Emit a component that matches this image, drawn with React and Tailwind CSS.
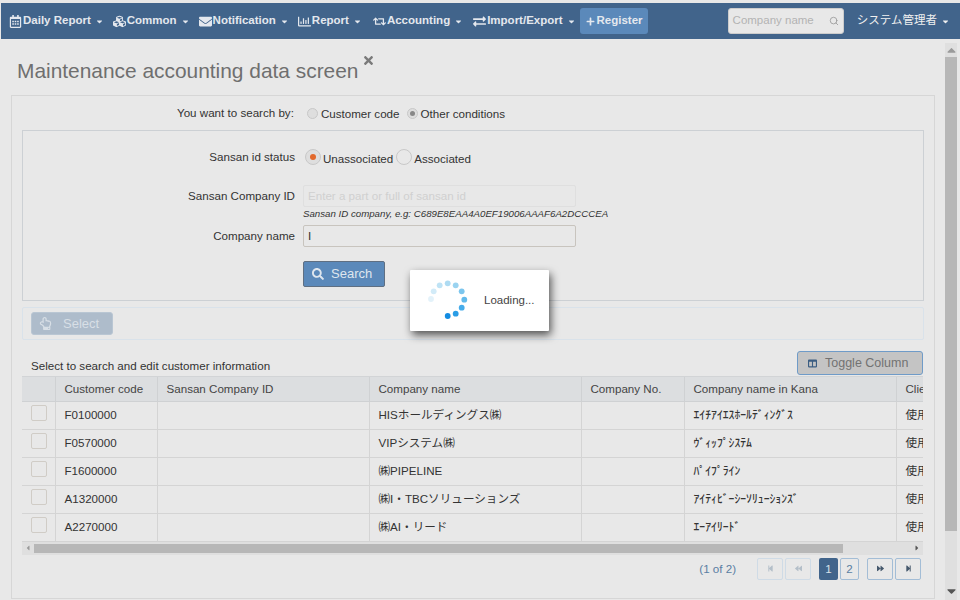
import React from 'react';
import { FaRegCalendarAlt, FaCubes, FaEnvelope, FaRegChartBar, FaRetweet, FaExchangeAlt, FaPlus, FaSearch, FaTimes, FaRegHandPointUp, FaColumns, FaCaretDown, FaCaretUp, FaCaretLeft, FaCaretRight, FaStepBackward, FaStepForward, FaBackward, FaForward } from 'react-icons/fa';
import { Search } from 'lucide-react';

const menus = [
  { label: 'Daily Report', icon: FaRegCalendarAlt, mr: 'mr-[9px]' },
  { label: 'Common', icon: FaCubes, mr: 'mr-[9px]' },
  { label: 'Notification', icon: FaEnvelope, mr: 'mr-[9px]' },
  { label: 'Report', icon: FaRegChartBar, mr: 'mr-[11px]' },
  { label: 'Accounting', icon: FaRetweet, mr: 'mr-[10px]' },
  { label: 'Import/Export', icon: FaExchangeAlt, mr: 'mr-[9px]' },
];

const rows = [
  ['F0100000', 'HISホールディングス㈱', 'ｴｲﾁｱｲｴｽﾎｰﾙﾃﾞｨﾝｸﾞｽ'],
  ['F0570000', 'VIPシステム㈱', 'ｳﾞｨｯﾌﾟｼｽﾃﾑ'],
  ['F1600000', '㈱PIPELINE', 'ﾊﾟｲﾌﾟﾗｲﾝ'],
  ['A1320000', '㈱I・TBCソリューションズ', 'ｱｲﾃｨﾋﾞｰｼｰｿﾘｭｰｼｮﾝｽﾞ'],
  ['A2270000', '㈱AI・リード', 'ｴｰｱｲﾘｰﾄﾞ'],
];

const headers = ['', 'Customer code', 'Sansan Company ID', 'Company name', 'Company No.', 'Company name in Kana', 'Client'];
const colWidths = ['w-[33px]', 'w-[102px]', 'w-[212px]', 'w-[212px]', 'w-[103px]', 'w-[212px]', 'w-[60px]'];

const dots = [
  [21, 29, '#e3f2fa'], [23.7, 21.3, '#d2ebf8'], [29.7, 15.3, '#bfe3f5'], [37.7, 13.3, '#aedbf2'],
  [45.7, 15.3, '#9ad3f0'], [51.7, 21.3, '#7cc6ee'], [54.3, 29.7, '#62baeb'], [51.7, 37.7, '#46acea'],
  [45.7, 43.7, '#2a9de6'], [37.7, 46, '#138ce2'],
];

function Radio({ checked, color = 'bg-[#888]', size = 'w-[11px] h-[11px] bg-[#dedede]', dot = 'w-[5px] h-[5px]' }) {
  return (
    <span className={`${size} rounded-full border border-[#c8c8c8] flex items-center justify-center shrink-0`}>
      {checked && <span className={`${dot} rounded-full ${color}`} />}
    </span>
  );
}

function PageButton({ children, faded }) {
  return (
    <span className={`w-[26px] h-[22px] rounded-[2px] border flex items-center justify-center text-[7px] ${faded ? 'border-[#cfdbe6] text-[#b4bfc9]' : 'border-[#a3bdd6] text-[#45586c]'}`}>
      {children}
    </span>
  );
}

export default function App() {
  return (
    <div className="relative w-[960px] h-[600px] overflow-hidden bg-[#e8e8e8] pt-[3px] flex flex-col text-[11.6px] text-[#333] font-['Liberation_Sans','Noto_Sans_CJK_JP',sans-serif]">
      <nav className="h-[36px] ml-px bg-[#41648b] flex items-center pl-[8px] pr-[10px] shrink-0 text-[#e4e8ee] font-bold text-[11.5px]">
        {menus.map((m) => (
          <span key={m.label} className={`flex items-center ${m.mr} gap-[1px] whitespace-nowrap`}>
            <m.icon className="text-[13px]" />
            {m.label}
            <FaCaretDown className="text-[9px] ml-[3px]" />
          </span>
        ))}
        <span className="h-[26px] pl-[6px] pr-[5px] rounded-[3px] bg-[#5b89ba] flex items-center gap-[2px] -ml-[5px]">
          <FaPlus className="text-[9px]" />
          Register
        </span>
        <span className="ml-[80px] w-[116px] h-[26px] rounded-[3px] bg-[#e8e8e8] border border-[#ccc] flex items-center justify-between px-[4px] font-normal text-[#b3b3b3] whitespace-nowrap">
          Company name
          <Search className="w-[10px] h-[10px] text-[#999]" />
        </span>
        <span className="ml-auto flex items-center gap-[4px] font-normal text-[11.5px] text-[#f0f0f0] whitespace-nowrap">
          システム管理者
          <FaCaretDown className="text-[9px]" />
        </span>
      </nav>

      <div className="flex-1 flex min-h-0">
        <main className="flex-1 min-w-0 pl-[11px] pr-[10px] overflow-hidden">
          <div className="flex items-start pl-[6px] pt-[18px] h-[56px]">
            <h1 className="text-[20.9px] leading-[26px] text-[#6f6f6f] mt-[1px]">Maintenance accounting data screen</h1>
            <FaTimes className="text-[13px] text-[#7a7a7a] ml-[4px] -mt-[3px]" />
          </div>

          <section className="border border-[#d6d6d6] h-[504px] px-[10px] pt-[10px]">
            <div className="flex items-center h-[15px] pl-[155px]">
              <span className="mr-[13px] -mt-[1px]">You want to search by:</span>
              <Radio />
              <span className="ml-[3px] mr-[7px] mt-[1px]">Customer code</span>
              <Radio checked />
              <span className="ml-[3px] mt-[1px]">Other conditions</span>
            </div>

            <div className="mt-[9px] border border-[#ccd0d4] h-[171px] relative">
              <div className="flex items-center pt-[16px] h-[38px]">
                <span className="w-[272px] text-right -mt-[2px]">Sansan id status</span>
                <span className="ml-[10px] flex items-center">
                  <Radio checked color="bg-[#e2692c]" size="w-[16px] h-[16px] -mt-[1px] bg-[#dedede]" dot="w-[6px] h-[6px]" />
                  <span className="ml-[2px] mr-[3px] mt-[2px]">Unassociated</span>
                  <Radio size="w-[16px] h-[16px] -mt-[1px]" />
                  <span className="ml-[2px] mt-[2px]">Associated</span>
                </span>
              </div>
              <div className="flex items-center mt-[16px]">
                <span className="w-[272px] text-right">Sansan Company ID</span>
                <span className="ml-[8px] w-[273px] h-[22px] border border-[#dfdfdf] rounded-[2px] px-[4px] leading-[20px] text-[#d0d0d0]">Enter a part or full of sansan id</span>
              </div>
              <p className="ml-[280px] text-[9.7px] italic leading-[14px] whitespace-nowrap">Sansan ID company, e.g: C689E8EAA4A0EF19006AAAF6A2DCCCEA</p>
              <div className="flex items-center mt-[4px]">
                <span className="w-[272px] text-right">Company name</span>
                <span className="ml-[8px] w-[273px] h-[22px] border border-[#c8c4be] rounded-[2px] px-[4px] leading-[20px]">I</span>
              </div>
              <button className="ml-[280px] mt-[14px] w-[82px] h-[26px] rounded-[2px] border border-[#5f6f82] bg-[#5b89ba] text-[#dfe6ee] text-[13px] flex items-center gap-[7px] pl-[8px]">
                <FaSearch className="text-[12px]" />
                Search
              </button>
            </div>

            <div className="mt-[6px] h-[33px] border border-[#d9e2ea] rounded-[2px] flex items-center pl-[8px]">
              <span className="w-[82px] h-[23px] rounded-[3px] bg-[#aebccb] border border-[#b9c6d3] text-[#d8dfe6] text-[13px] flex items-center gap-[11px] pl-[7px]">
                <FaRegHandPointUp className="text-[13px]" />
                Select
              </span>
            </div>

            <div className="mt-[10px] h-[26px] flex items-end justify-between">
              <span className="pl-[9px] leading-[15px] mb-[3px]">Select to search and edit customer information</span>
              <span className="w-[126px] h-[24px] mb-[1px] mr-[1px] rounded-[3px] border border-[#6f9bc8] bg-[#c4c4c4] text-[#727272] text-[12.5px] flex items-center gap-[8px] pl-[10px]">
                <FaColumns className="text-[9px] text-[#3b5d82]" />
                Toggle Column
              </span>
            </div>

            <div className="overflow-hidden border-t border-[#d2d4d6] mr-[1px]">
              <table className="border-collapse table-fixed w-[934px]">
                <thead>
                  <tr className="h-[24px] bg-[#dcdee0] text-[#444]">
                    {headers.map((h, i) => (
                      <th key={i} className={`${colWidths[i]} border-x border-b border-[#cfd1d3] first:border-l-0 px-[9px] pb-[1px] font-normal text-left whitespace-nowrap overflow-hidden`}>{h}</th>
                    ))}
                  </tr>
                </thead>
                <tbody>
                  {rows.map((r) => (
                    <tr key={r[0]} className="h-[28px]">
                      <td className="border border-[#d4d4d4] border-l-0 pl-[9px]"><span className="block w-[16px] h-[16px] -mt-[4px] rounded-[2px] border border-[#d0ccc6]" /></td>
                      <td className="border border-[#d4d4d4] px-[9px]">{r[0]}</td>
                      <td className="border border-[#d4d4d4]" />
                      <td className="border border-[#d4d4d4] px-[9px] whitespace-nowrap">{r[1]}</td>
                      <td className="border border-[#d4d4d4]" />
                      <td className="border border-[#d4d4d4] px-[9px] whitespace-nowrap text-[11.7px] font-medium">{r[2]}</td>
                      <td className="border border-[#d4d4d4] px-[9px] whitespace-nowrap overflow-hidden">使用中</td>
                    </tr>
                  ))}
                </tbody>
              </table>
            </div>

            <div className="h-[13px] mr-[1px] bg-[#dfdfdf] flex items-center">
              <span className="w-[12px] flex justify-center text-[8px] text-[#9a9a9a]"><FaCaretLeft /></span>
              <span className="w-[809px] h-[9px] bg-[#b7b7b7]" />
              <span className="ml-auto w-[12px] flex justify-center text-[8px] text-[#555]"><FaCaretRight /></span>
            </div>

            <div className="mt-[3px] flex items-center justify-end pr-[3px] gap-[2px] text-[#5a7ea3]">
              <span className="mr-[19px]">(1 of 2)</span>
              <PageButton faded><FaStepBackward /></PageButton>
              <span className="mr-[6px]"><PageButton faded><FaBackward /></PageButton></span>
              <span className="w-[19px] h-[22px] rounded-[2px] bg-[#41648b] text-[#d9e1ea] flex items-center justify-center">1</span>
              <span className="w-[19px] h-[22px] rounded-[2px] border border-[#a3bdd6] flex items-center justify-center">2</span>
              <span className="ml-[6px]"><PageButton><FaForward /></PageButton></span>
              <PageButton><FaStepForward /></PageButton>
            </div>
          </section>
        </main>

        <div className="relative w-[12px] mr-[3px] mt-[4px] bg-[#dfdfdf] flex flex-col items-center shrink-0">
          <FaCaretUp className="text-[9px] text-[#9a9a9a] h-[14px]" />
          <span className="w-full flex-1 bg-[#b7b7b7] mb-[69px]" />
          <FaCaretDown className="text-[9px] text-[#555] h-[14px] absolute bottom-[2px]" />
        </div>
      </div>

      {/* loading dialog sits over the page */}
      <div className="absolute left-[410px] top-[270px] w-[139px] h-[61px] bg-white rounded-[1px] shadow-[2px_4px_8px_rgba(0,0,0,0.65)] flex items-center">
        <svg width="62" height="61" viewBox="0 0 62 61" className="shrink-0">
          {dots.map(([x, y, c], i) => (
            <circle key={i} cx={x} cy={y} r="2.9" fill={c} />
          ))}
        </svg>
        <span className="ml-[12px] text-[11.5px] text-[#444]">Loading...</span>
      </div>
    </div>
  );
}
